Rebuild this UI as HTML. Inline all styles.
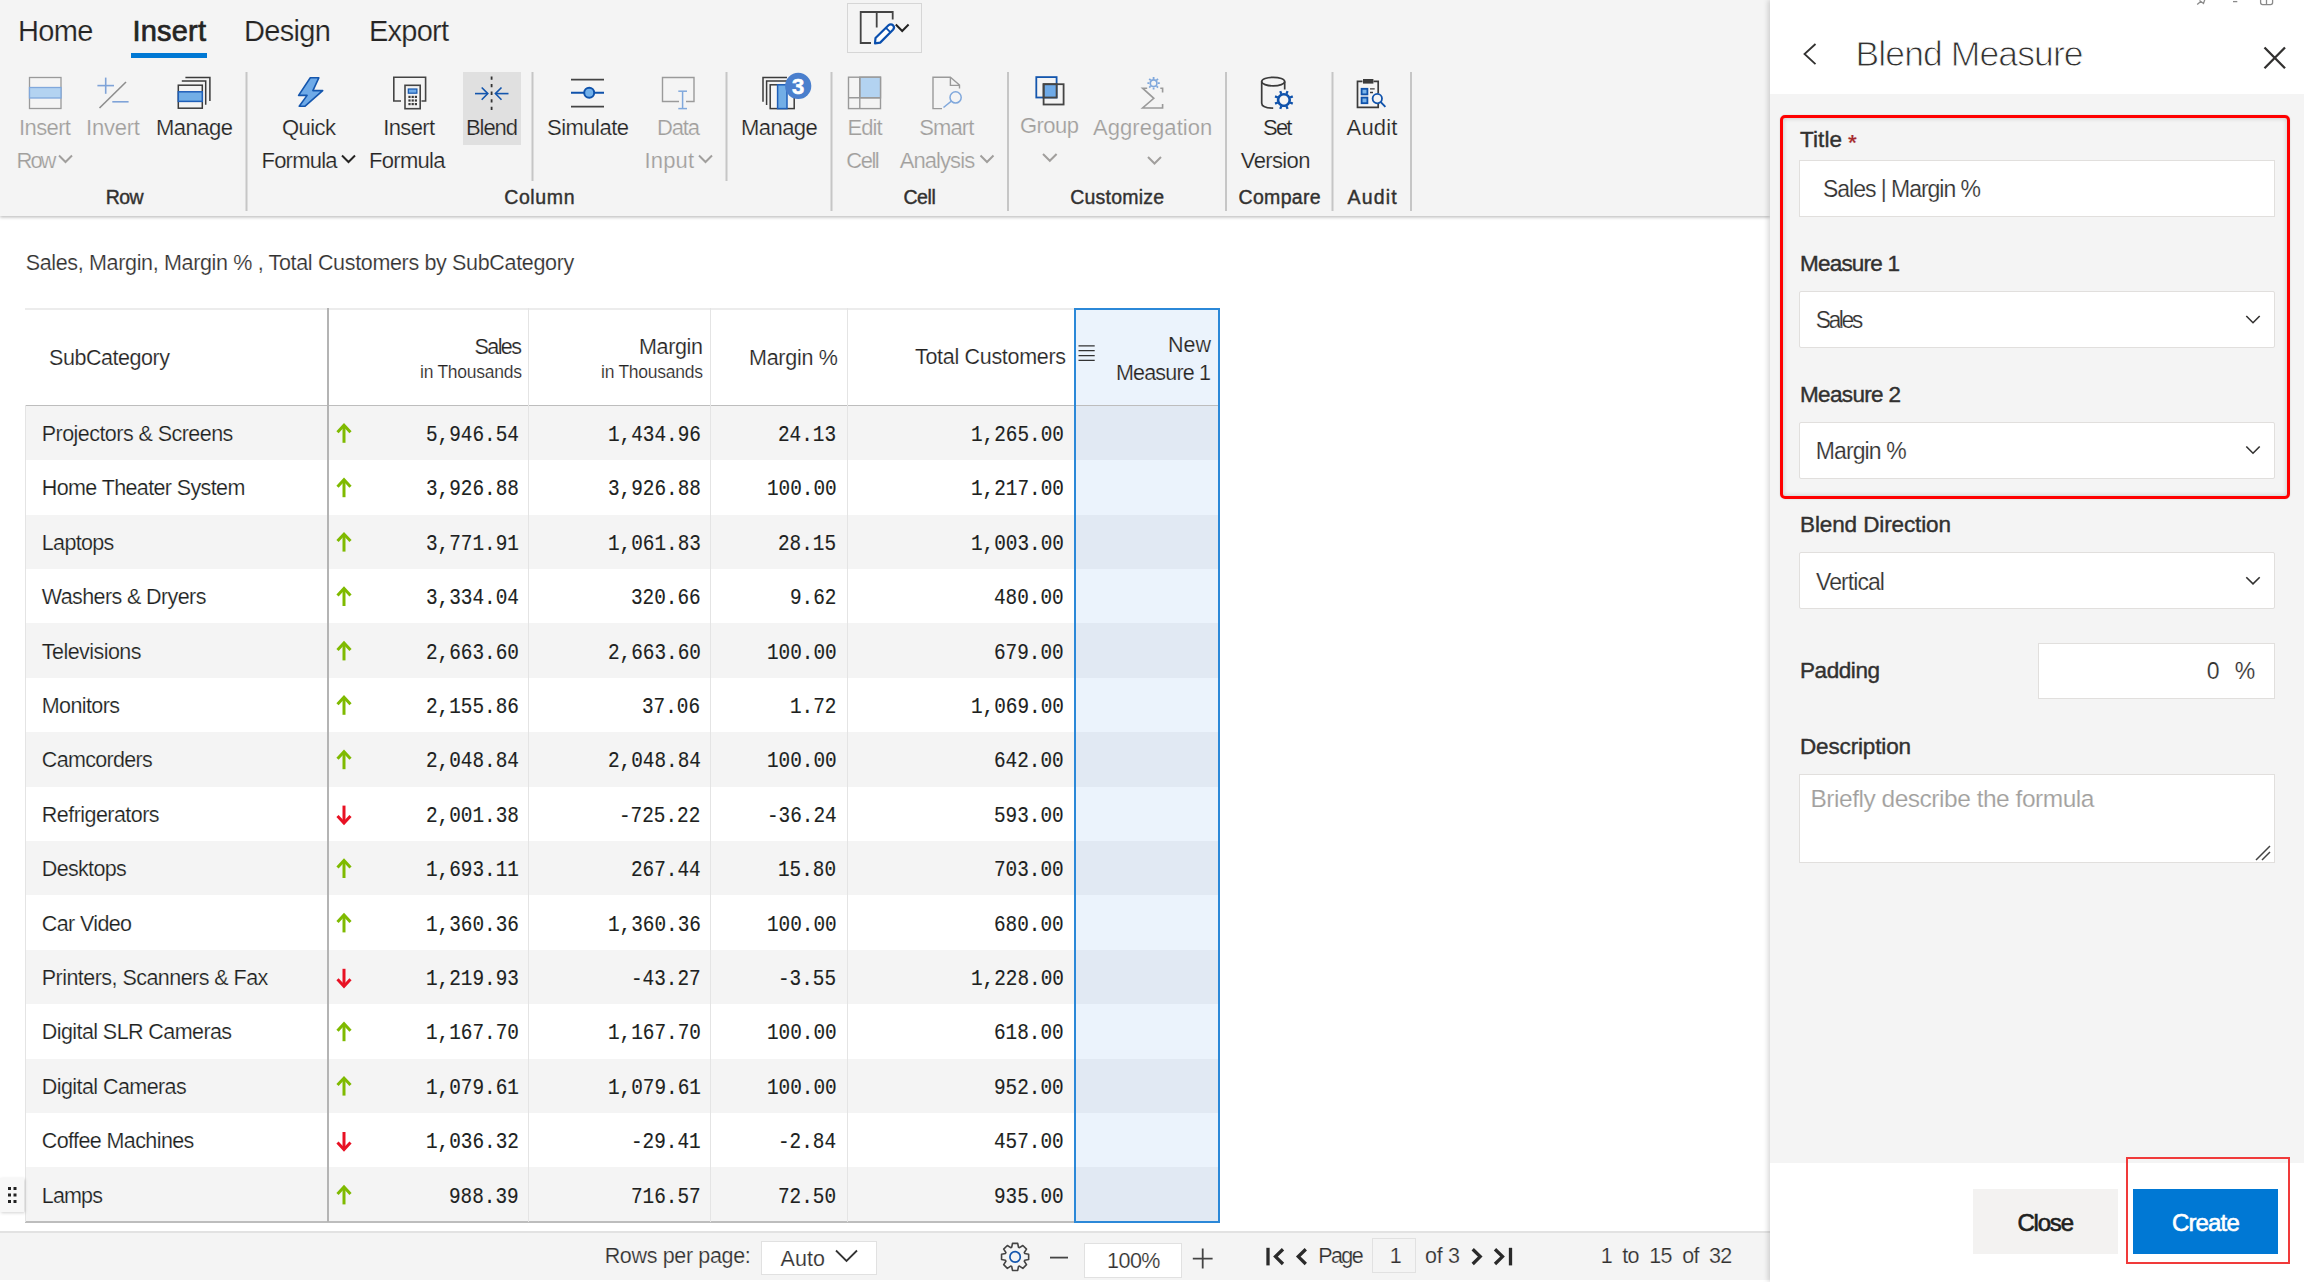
<!DOCTYPE html>
<html><head><meta charset="utf-8">
<style>
html,body{margin:0;padding:0;}
body{width:2304px;height:1282px;overflow:hidden;position:relative;background:#fff;font-family:"Liberation Sans",sans-serif;color:#252423;}
.a{position:absolute;box-sizing:border-box;}
.t{position:absolute;white-space:pre;line-height:1;-webkit-text-stroke:0.2px #f6f6f6;}
.S{font-family:"Liberation Sans",sans-serif;}
.M{font-family:"Liberation Mono",monospace;}
.rowbg{position:absolute;left:25px;width:1049px;background:#f4f4f4;}
.nmbg{position:absolute;left:1075px;width:143px;background:#e1e9f3;}
svg{position:absolute;left:0;top:0;}
</style></head><body>
<!-- ribbon -->
<div class="a" style="left:0;top:0;width:1770px;height:216px;background:#f4f4f4;box-shadow:0 1.5px 3px rgba(0,0,0,0.25);"></div>
<div class="a" style="left:131px;top:53px;width:76px;height:4.5px;background:#0078d4;"></div>
<div class="a" style="left:847px;top:2.5px;width:75px;height:50px;border:1.5px solid #d6d6d6;"></div>
<div class="a" style="left:463px;top:72px;width:58px;height:73px;background:#e0e0e0;"></div>

<!-- table -->
<div class="a" style="left:1074px;top:308px;width:145px;height:914px;background:#ebf3fc;"></div>
<div class="rowbg" style="top:405.80px;height:54.40px"></div>
<div class="nmbg" style="top:405.80px;height:54.40px"></div>
<div class="rowbg" style="top:514.60px;height:54.40px"></div>
<div class="nmbg" style="top:514.60px;height:54.40px"></div>
<div class="rowbg" style="top:623.40px;height:54.40px"></div>
<div class="nmbg" style="top:623.40px;height:54.40px"></div>
<div class="rowbg" style="top:732.20px;height:54.40px"></div>
<div class="nmbg" style="top:732.20px;height:54.40px"></div>
<div class="rowbg" style="top:841.00px;height:54.40px"></div>
<div class="nmbg" style="top:841.00px;height:54.40px"></div>
<div class="rowbg" style="top:949.80px;height:54.40px"></div>
<div class="nmbg" style="top:949.80px;height:54.40px"></div>
<div class="rowbg" style="top:1058.60px;height:54.40px"></div>
<div class="nmbg" style="top:1058.60px;height:54.40px"></div>
<div class="rowbg" style="top:1167.40px;height:54.40px"></div>
<div class="nmbg" style="top:1167.40px;height:54.40px"></div>
<div class="a" style="left:25px;top:307.8px;width:1049px;height:1.8px;background:#ececec;"></div>
<div class="a" style="left:25px;top:404.5px;width:1194px;height:1.5px;background:#bdbdbd;"></div>
<div class="a" style="left:25px;top:1221px;width:1194px;height:2px;background:#bdbdbd;"></div>
<div class="a" style="left:25px;top:405px;width:1px;height:817px;background:#e4e4e4;"></div>
<div class="a" style="left:327px;top:308px;width:1.5px;height:914px;background:#b4b4b4;"></div>
<div class="a" style="left:528px;top:308px;width:1px;height:914px;background:#e4e4e4;"></div>
<div class="a" style="left:710px;top:308px;width:1px;height:914px;background:#e4e4e4;"></div>
<div class="a" style="left:847px;top:308px;width:1px;height:914px;background:#e4e4e4;"></div>
<div class="a" style="left:1073.5px;top:308px;width:146px;height:914.5px;border:2px solid #2b88d8;"></div>
<!-- drag handle -->
<div class="a" style="left:0;top:1177.5px;width:24px;height:34.5px;background:#f7f7f7;box-shadow:1px 1px 3px rgba(0,0,0,0.18);"></div>

<!-- footer -->
<div class="a" style="left:0;top:1231px;width:1770px;height:49px;background:#f4f4f4;border-top:2px solid #e2e2e2;"></div>
<div class="a" style="left:761px;top:1240.5px;width:116px;height:34.5px;background:#fff;border:1px solid #e1e1e1;"></div>
<div class="a" style="left:1084px;top:1242.5px;width:97.5px;height:35px;background:#fff;border:1px solid #e1e1e1;"></div>
<div class="a" style="left:1372px;top:1237.5px;width:44px;height:35px;border:1px solid #e1e1e1;"></div>

<!-- panel -->
<div class="a" style="left:1770px;top:0;width:534px;height:1282px;background:#f4f4f4;box-shadow:-2px 0 5px rgba(0,0,0,0.16);"></div>
<div class="a" style="left:1770px;top:0;width:534px;height:94px;background:#fff;"></div>
<div class="a" style="left:1770px;top:1163px;width:534px;height:119px;background:#fff;"></div>
<div class="a" style="left:1780.2px;top:115px;width:509.5px;height:384px;border:3px solid #ff0000;border-radius:5px;box-shadow:inset 0 0 5px rgba(0,0,0,0.2), 0 0 1.5px rgba(0,0,0,0.2);"></div>
<div class="a" style="left:1799px;top:160px;width:476px;height:57px;background:#fff;border:1px solid #e1dfdd;"></div>
<div class="a" style="left:1799px;top:291px;width:476px;height:57px;background:#fff;border:1px solid #e1dfdd;border-radius:2px;"></div>
<div class="a" style="left:1799px;top:422px;width:476px;height:57px;background:#fff;border:1px solid #e1dfdd;border-radius:2px;"></div>
<div class="a" style="left:1799px;top:552px;width:476px;height:57px;background:#fff;border:1px solid #e1dfdd;border-radius:2px;"></div>
<div class="a" style="left:2037.5px;top:643px;width:237px;height:56px;background:#fff;border:1px solid #e1dfdd;"></div>
<div class="a" style="left:1799px;top:773.5px;width:476px;height:89px;background:#fff;border:1px solid #e1dfdd;"></div>
<div class="a" style="left:1973px;top:1189px;width:145px;height:65px;background:#f3f2f1;"></div>
<div class="a" style="left:2133px;top:1189px;width:145px;height:65px;background:#0078d4;"></div>
<div class="a" style="left:2125.5px;top:1157px;width:164px;height:106.5px;border:2px solid #f03a3a;"></div>

<svg width="2304" height="1282" viewBox="0 0 2304 1282">
<g stroke="#7fba00" stroke-width="3" fill="none"><path d="M344 442.8V425.8"/><path d="M337.5 432.3L344 425.3L350.5 432.3"/></g>
<g stroke="#7fba00" stroke-width="3" fill="none"><path d="M344 497.2V480.2"/><path d="M337.5 486.7L344 479.7L350.5 486.7"/></g>
<g stroke="#7fba00" stroke-width="3" fill="none"><path d="M344 551.6V534.6"/><path d="M337.5 541.1L344 534.1L350.5 541.1"/></g>
<g stroke="#7fba00" stroke-width="3" fill="none"><path d="M344 606.0V589.0"/><path d="M337.5 595.5L344 588.5L350.5 595.5"/></g>
<g stroke="#7fba00" stroke-width="3" fill="none"><path d="M344 660.4V643.4"/><path d="M337.5 649.9L344 642.9L350.5 649.9"/></g>
<g stroke="#7fba00" stroke-width="3" fill="none"><path d="M344 714.8V697.8"/><path d="M337.5 704.3L344 697.3L350.5 704.3"/></g>
<g stroke="#7fba00" stroke-width="3" fill="none"><path d="M344 769.2V752.2"/><path d="M337.5 758.7L344 751.7L350.5 758.7"/></g>
<g stroke="#e81123" stroke-width="3" fill="none"><path d="M344 805.6V822.6"/><path d="M337.5 816.1L344 823.1L350.5 816.1"/></g>
<g stroke="#7fba00" stroke-width="3" fill="none"><path d="M344 878.0V861.0"/><path d="M337.5 867.5L344 860.5L350.5 867.5"/></g>
<g stroke="#7fba00" stroke-width="3" fill="none"><path d="M344 932.4V915.4"/><path d="M337.5 921.9L344 914.9L350.5 921.9"/></g>
<g stroke="#e81123" stroke-width="3" fill="none"><path d="M344 968.8V985.8"/><path d="M337.5 979.3L344 986.3L350.5 979.3"/></g>
<g stroke="#7fba00" stroke-width="3" fill="none"><path d="M344 1041.2V1024.2"/><path d="M337.5 1030.7L344 1023.7L350.5 1030.7"/></g>
<g stroke="#7fba00" stroke-width="3" fill="none"><path d="M344 1095.6V1078.6"/><path d="M337.5 1085.1L344 1078.1L350.5 1085.1"/></g>
<g stroke="#e81123" stroke-width="3" fill="none"><path d="M344 1132.0V1149.0"/><path d="M337.5 1142.5L344 1149.5L350.5 1142.5"/></g>
<g stroke="#7fba00" stroke-width="3" fill="none"><path d="M344 1204.4V1187.4"/><path d="M337.5 1193.9L344 1186.9L350.5 1193.9"/></g>
<!-- separators -->
<g stroke="#c6c6c6" stroke-width="2">
<path d="M246.5 72V211"/><path d="M532.5 72V181"/><path d="M726.5 72V181"/>
<path d="M831.5 72V211"/><path d="M1008 72V211"/><path d="M1226 72V211"/><path d="M1332.5 72V211"/><path d="M1411 72V211"/>
</g>
<!-- chevrons in ribbon -->
<g fill="none" stroke-width="2">
<path d="M59 155.5L65.5 162L72 155.5" stroke="#a19f9d"/>
<path d="M342 155.5L348.5 162L355 155.5" stroke="#252423"/>
<path d="M699 155.5L705.5 162L712 155.5" stroke="#a19f9d"/>
<path d="M980.5 155.5L987 162L993.5 155.5" stroke="#a19f9d"/>
<path d="M1043 154L1049.8 160.8L1056.6 154" stroke="#a19f9d"/>
<path d="M1148 157L1154.5 163.5L1161 157" stroke="#a19f9d"/>
</g>
<!-- Insert Row -->
<rect x="29.5" y="77.5" width="31.5" height="31" fill="none" stroke="#9a9a9a" stroke-width="1.3"/>
<rect x="29.5" y="87.5" width="31.5" height="10.5" fill="#b3d3f1" stroke="#80a8dc" stroke-width="1.3"/>
<!-- Invert -->
<g stroke="#7fa3d8" stroke-width="1.6" fill="none"><path d="M97.4 85.6H114"/><path d="M105.7 77.6V93.8"/><path d="M112.3 101.8H128.6"/></g>
<path d="M99.5 108L126 82" stroke="#8d8d8d" stroke-width="1.6"/>
<!-- Manage row -->
<g fill="none" stroke="#3b3b3b" stroke-width="1.5">
<path d="M185.4 77.5H209.9V101"/><path d="M181.8 80.9H205.7V104.7"/>
<rect x="178.3" y="85.2" width="24" height="23"/>
</g>
<rect x="178.3" y="91.8" width="24" height="9.6" fill="#72aee6" stroke="#1f5fb8" stroke-width="1.5"/>
<!-- Quick formula -->
<polygon points="310.3,77.8 318.8,77.8 312.9,90.6 322.7,90.6 305.1,106.2 299.2,106.2 307.1,95.4 298.6,95.4" fill="#6eaae8" stroke="#1456ad" stroke-width="1.6" stroke-linejoin="round"/>
<!-- Insert Formula -->
<path d="M401 101H393.8V77.2H425.6V101H421.5" fill="none" stroke="#444" stroke-width="1.6"/>
<rect x="405" y="85.3" width="15.2" height="23.4" fill="#f4f4f4" stroke="#444" stroke-width="1.6"/>
<rect x="408.3" y="89" width="8.6" height="4.2" fill="#6eaae8" stroke="#1456ad" stroke-width="1.2"/>
<g fill="#3a3a3a"><rect x="408.4" y="95.8" width="2.2" height="2.2"/><rect x="411.6" y="95.8" width="2.2" height="2.2"/><rect x="414.8" y="95.8" width="2.2" height="2.2"/><rect x="408.4" y="99.4" width="2.2" height="2.2"/><rect x="411.6" y="99.4" width="2.2" height="2.2"/><rect x="414.8" y="99.4" width="2.2" height="2.2"/><rect x="408.4" y="103.0" width="2.2" height="2.2"/><rect x="411.6" y="103.0" width="2.2" height="2.2"/><rect x="414.8" y="103.0" width="2.2" height="2.2"/></g>
<!-- Blend -->
<path d="M491.6 76.4V110" stroke="#333" stroke-width="1.8" stroke-dasharray="3.3 4.3"/>
<g fill="none" stroke="#1456ad" stroke-width="1.6"><path d="M475 93.6H487.5"/><path d="M481.7 87.5L487.8 93.6L481.7 99.7"/><path d="M508.5 93.6H495.7"/><path d="M501.5 87.5L495.4 93.6L501.5 99.7"/></g>
<!-- Simulate -->
<g stroke="#444" stroke-width="1.6"><path d="M571 79.6H604"/><path d="M571 106.6H604"/></g>
<path d="M571 92.8H604" stroke="#0f52ab" stroke-width="1.9"/>
<circle cx="589.2" cy="92.8" r="5" fill="#72b0ea" stroke="#0f52ab" stroke-width="2"/>
<!-- Data input -->
<path d="M679 101.5H662.5V77.5H694V101.5H686" fill="none" stroke="#9a9a9a" stroke-width="1.4"/>
<g stroke="#80a8dc" stroke-width="1.5" fill="none"><path d="M682.6 91.2V108.6"/><path d="M678.3 91.2H687"/><path d="M678.3 108.6H687"/></g>
<!-- Manage column -->
<g fill="none" stroke="#3b3b3b" stroke-width="1.5">
<path d="M763 101.7V77.4H787"/><path d="M766.6 105V81H790"/>
<rect x="770.2" y="84.8" width="24" height="23.8"/>
</g>
<rect x="777.6" y="84.8" width="9.4" height="23.8" fill="#72aee6" stroke="#1f5fb8" stroke-width="1.5"/>
<circle cx="798.2" cy="85.9" r="13.1" fill="#4a7fcd"/>
<text x="798.2" y="93.9" font-family="Liberation Sans" font-weight="700" font-size="22" fill="#fff" stroke="#fff" stroke-width="0.6" text-anchor="middle">3</text>
<!-- Edit cell -->
<rect x="848.5" y="77.2" width="32" height="31.4" fill="none" stroke="#9a9a9a" stroke-width="1.4"/>
<rect x="859.8" y="77.2" width="20.7" height="20.6" fill="#b3d3f1" stroke="#9a9a9a" stroke-width="1.4"/>
<path d="M848.5 97.8H880.5M859.8 77.2V108.6" stroke="#9a9a9a" stroke-width="1.4"/>
<!-- Smart analysis -->
<path d="M942 108.6H933V77.2H950.4L959.5 85V88.5M950.4 77.2V85.4H959.5" fill="none" stroke="#9a9a9a" stroke-width="1.4"/>
<circle cx="955.6" cy="97.4" r="5.6" fill="none" stroke="#80a8dc" stroke-width="1.5"/>
<path d="M951.5 101L943.5 107.5" stroke="#80a8dc" stroke-width="1.6"/>
<!-- Group -->
<rect x="1036.3" y="77.1" width="20.3" height="20.4" fill="none" stroke="#1456ad" stroke-width="1.8"/>
<rect x="1043.6" y="84.2" width="13" height="13.3" fill="#6eaae8"/>
<rect x="1043.6" y="84.2" width="20" height="20.3" fill="none" stroke="#444" stroke-width="1.8"/>
<rect x="1043.6" y="84.2" width="13" height="13.3" fill="none" stroke="#444" stroke-width="1.8"/>
<!-- Aggregation -->
<path d="M1147.2 88.2H1142.6L1153.8 98.3L1142.6 108H1162.6V104M1160.3 88.2H1162.6V92.6" fill="none" stroke="#9a9a9a" stroke-width="1.6"/>
<g transform="translate(1153.6 83.2)" stroke="#80a8dc" fill="none">
<circle r="3.3" stroke-width="1.6"/>
<path d="M0 -6.2V-4.2M0 4.2V6.2M-6.2 0H-4.2M4.2 0H6.2M-4.4 -4.4L-3 -3M3 3L4.4 4.4M-4.4 4.4L-3 3M3 -3L4.4 -4.4" stroke-width="1.8"/>
</g>
<!-- Set version -->
<g fill="none" stroke="#3b3b3b" stroke-width="1.7">
<ellipse cx="1273.2" cy="81.6" rx="11.5" ry="4.3"/>
<path d="M1261.7 81.6V103.2C1261.7 106 1266 108 1273.2 108.2"/>
<path d="M1284.7 81.6V89.5"/>
</g>
<g transform="translate(1283.9 100) rotate(22.5)">
<circle r="9.6" fill="#f4f4f4"/>
<circle r="5.8" fill="none" stroke="#0f52ab" stroke-width="2.6"/>
<path d="M0 -9.6V-6.6M0 6.6V9.6M-9.6 0H-6.6M6.6 0H9.6M-6.8 -6.8L-4.7 -4.7M4.7 4.7L6.8 6.8M-6.8 6.8L-4.7 4.7M4.7 -4.7L6.8 -6.8" stroke="#0f52ab" stroke-width="2.3"/>
</g>
<!-- Audit -->
<path d="M1362.5 81.3H1357.5V107.4H1378.2V101.5M1378.2 93.5V81.3H1373.5" fill="none" stroke="#3b3b3b" stroke-width="1.7"/>
<rect x="1363" y="79" width="10.4" height="4.6" fill="#3b3b3b"/>
<rect x="1361.6" y="88.8" width="5.8" height="5.6" fill="#7ab4ea" stroke="#0f52ab" stroke-width="1.8"/>
<rect x="1361.6" y="97.6" width="5.8" height="5.6" fill="#7ab4ea" stroke="#0f52ab" stroke-width="1.8"/>
<path d="M1370 88.9H1374.7M1370 92.5H1373" stroke="#3b3b3b" stroke-width="1.4"/>
<circle cx="1377.3" cy="98.6" r="4.7" fill="#f4f4f4" stroke="#0f52ab" stroke-width="1.8"/>
<path d="M1380.8 102.2L1385.4 106.8" stroke="#0f52ab" stroke-width="1.9"/>
<!-- quick access icon -->
<path d="M871 43H860.7V12H892.7V19.5M876.7 12V27.6" fill="none" stroke="#444" stroke-width="1.8"/>
<path d="M875 43.4L875.5 38L888.5 25.3C889.8 24 891.8 24 893 25.3C894.2 26.6 894.2 28.5 893 29.8L880.2 42.6Z" fill="#fff" stroke="#0a4fae" stroke-width="2.2" stroke-linejoin="round"/>
<path d="M886 27.8L890.5 32.3" stroke="#0a4fae" stroke-width="1.8"/>
<path d="M895.8 24.5L902.2 31L908.6 24.5" fill="none" stroke="#222" stroke-width="2"/>
<!-- table header hamburger -->
<path d="M1078.5 345.8H1094.7M1078.5 350.7H1094.7M1078.5 355.6H1094.7M1078.5 360.3H1094.7" stroke="#333" stroke-width="1.3"/>
<!-- drag handle dots -->
<g fill="#222"><rect x="8" y="1187" width="3" height="3"/><rect x="13.5" y="1187" width="3" height="3"/><rect x="8" y="1193.5" width="3" height="3"/><rect x="13.5" y="1193.5" width="3" height="3"/><rect x="8" y="1200" width="3" height="3"/><rect x="13.5" y="1200" width="3" height="3"/></g>
<!-- footer icons -->
<path d="M836 1250.5L846.5 1261L857 1250.5" fill="none" stroke="#333" stroke-width="1.8"/>
<path d="M1011.70 1247.28 L1012.50 1243.35 L1017.70 1243.35 L1018.50 1247.28 L1019.50 1247.70 L1022.84 1245.48 L1026.52 1249.16 L1024.30 1252.50 L1024.72 1253.50 L1028.65 1254.30 L1028.65 1259.50 L1024.72 1260.30 L1024.30 1261.30 L1026.52 1264.64 L1022.84 1268.32 L1019.50 1266.10 L1018.50 1266.52 L1017.70 1270.45 L1012.50 1270.45 L1011.70 1266.52 L1010.70 1266.10 L1007.36 1268.32 L1003.68 1264.64 L1005.90 1261.30 L1005.48 1260.30 L1001.55 1259.50 L1001.55 1254.30 L1005.48 1253.50 L1005.90 1252.50 L1003.68 1249.16 L1007.36 1245.48 L1010.70 1247.70Z" fill="none" stroke="#444" stroke-width="1.6" stroke-linejoin="round"/>
<circle cx="1015.1" cy="1256.9" r="5.2" fill="none" stroke="#1456ad" stroke-width="1.7"/>
<path d="M1050 1257.6H1068" stroke="#444" stroke-width="1.8"/>
<path d="M1192.8 1258.6H1212.6M1202.7 1248.6V1268.6" stroke="#444" stroke-width="1.8"/>
<g fill="none" stroke="#2a2a2a" stroke-width="3.3" stroke-linejoin="miter">
<path d="M1268 1247.8V1265.4"/><path d="M1283 1249.3L1275.5 1256.6L1283 1264"/>
<path d="M1305.8 1249.3L1298.3 1256.6L1305.8 1264"/>
<path d="M1472.7 1249.3L1480.2 1256.6L1472.7 1264"/>
<path d="M1495 1249.3L1502.5 1256.6L1495 1264"/><path d="M1510.5 1247.8V1265.4"/>
</g>
<!-- panel icons -->
<path d="M1815.5 44L1804.5 54L1815.5 64.2" fill="none" stroke="#323130" stroke-width="1.8"/>
<path d="M2264.5 47.5L2285 68.2M2285 47.5L2264.5 68.2" stroke="#323130" stroke-width="2.3"/>
<g fill="none" stroke="#323130" stroke-width="1.6">
<path d="M2246.3 316L2253 322.7L2259.7 316"/>
<path d="M2246.3 446.5L2253 453.2L2259.7 446.5"/>
<path d="M2246.3 577.2L2253 583.9L2259.7 577.2"/>
</g>
<path d="M2256 860L2270 846M2262 860L2270 852" stroke="#444" stroke-width="1.5"/>
<!-- top tiny window icons -->
<g stroke="#8a8a8a" stroke-width="1.3" fill="none"><path d="M2197.2 4.5L2201 1.2M2199.5 0.5L2203.5 3.5L2205 -1"/><path d="M2233 1.6H2237.3"/><rect x="2260.6" y="-6" width="12" height="10.6" rx="2"/><path d="M2266.5 -6V4.5"/></g>

</svg>
<div class="t S" style="top:17.0px;font-size:29px;letter-spacing:-0.62px;left:18.0px;">Home</div>
<div class="t S" style="top:17.0px;font-size:29px;letter-spacing:0.19px;left:132.5px;-webkit-text-stroke:0.7px #252423;">Insert</div>
<div class="t S" style="top:17.0px;font-size:29px;letter-spacing:-0.66px;left:244.0px;">Design</div>
<div class="t S" style="top:17.0px;font-size:29px;letter-spacing:-0.77px;left:369.0px;">Export</div>
<div class="t S" style="top:117.3px;font-size:22px;color:#a19f9d;letter-spacing:-0.61px;left:19.0px;">Insert</div>
<div class="t S" style="top:149.8px;font-size:22px;color:#a19f9d;letter-spacing:-2.01px;left:16.5px;">Row</div>
<div class="t S" style="top:117.3px;font-size:22px;color:#a19f9d;letter-spacing:-0.21px;left:86.0px;">Invert</div>
<div class="t S" style="top:117.3px;font-size:22px;letter-spacing:-0.50px;left:156.0px;">Manage</div>
<div class="t S" style="top:117.3px;font-size:22px;letter-spacing:-0.56px;left:282.0px;">Quick</div>
<div class="t S" style="top:149.8px;font-size:22px;letter-spacing:-0.78px;left:261.5px;">Formula</div>
<div class="t S" style="top:117.3px;font-size:22px;letter-spacing:-0.61px;left:383.2px;">Insert</div>
<div class="t S" style="top:149.8px;font-size:22px;letter-spacing:-0.70px;left:369.0px;">Formula</div>
<div class="t S" style="top:117.3px;font-size:22px;letter-spacing:-1.07px;left:466.0px;">Blend</div>
<div class="t S" style="top:117.3px;font-size:22px;letter-spacing:-0.51px;left:547.0px;">Simulate</div>
<div class="t S" style="top:117.3px;font-size:22px;color:#a19f9d;letter-spacing:-1.16px;left:657.0px;">Data</div>
<div class="t S" style="top:149.8px;font-size:22px;color:#a19f9d;letter-spacing:0.12px;left:644.6px;">Input</div>
<div class="t S" style="top:117.3px;font-size:22px;letter-spacing:-0.54px;left:741.0px;">Manage</div>
<div class="t S" style="top:117.3px;font-size:22px;color:#a19f9d;letter-spacing:-0.97px;left:847.6px;">Edit</div>
<div class="t S" style="top:149.8px;font-size:22px;color:#a19f9d;letter-spacing:-1.50px;left:846.3px;">Cell</div>
<div class="t S" style="top:117.3px;font-size:22px;color:#a19f9d;letter-spacing:-0.85px;left:919.2px;">Smart</div>
<div class="t S" style="top:149.8px;font-size:22px;color:#a19f9d;letter-spacing:-0.92px;left:899.7px;">Analysis</div>
<div class="t S" style="top:115.0px;font-size:22px;color:#a19f9d;letter-spacing:-0.54px;left:1020.0px;">Group</div>
<div class="t S" style="top:117.3px;font-size:22px;color:#a19f9d;letter-spacing:0.07px;left:1093.0px;">Aggregation</div>
<div class="t S" style="top:117.3px;font-size:22px;letter-spacing:-1.77px;left:1263.0px;">Set</div>
<div class="t S" style="top:149.8px;font-size:22px;letter-spacing:-0.63px;left:1240.8px;">Version</div>
<div class="t S" style="top:117.3px;font-size:22px;letter-spacing:0.14px;left:1346.6px;">Audit</div>
<div class="t S" style="top:187.9px;font-size:19.5px;color:#323130;letter-spacing:-0.56px;left:105.8px;-webkit-text-stroke:0.4px #323130;">Row</div>
<div class="t S" style="top:187.9px;font-size:19.5px;color:#323130;letter-spacing:0.62px;left:504.2px;-webkit-text-stroke:0.4px #323130;">Column</div>
<div class="t S" style="top:187.9px;font-size:19.5px;color:#323130;letter-spacing:-0.40px;left:903.4px;-webkit-text-stroke:0.4px #323130;">Cell</div>
<div class="t S" style="top:187.9px;font-size:19.5px;color:#323130;letter-spacing:0.20px;left:1070.3px;-webkit-text-stroke:0.4px #323130;">Customize</div>
<div class="t S" style="top:187.9px;font-size:19.5px;color:#323130;letter-spacing:0.30px;left:1238.6px;-webkit-text-stroke:0.4px #323130;">Compare</div>
<div class="t S" style="top:187.9px;font-size:19.5px;color:#323130;letter-spacing:1.21px;left:1347.5px;-webkit-text-stroke:0.4px #323130;">Audit</div>
<div class="t S" style="top:252.5px;font-size:21.5px;color:#323130;letter-spacing:-0.34px;left:25.7px;">Sales, Margin, Margin % , Total Customers by SubCategory</div>
<div class="t S" style="top:348.0px;font-size:21.5px;letter-spacing:-0.45px;left:49.0px;">SubCategory</div>
<div class="t S" style="top:337.1px;font-size:21.5px;letter-spacing:-1.57px;left:474.5px;">Sales</div>
<div class="t S" style="top:363.5px;font-size:17.5px;letter-spacing:-0.25px;left:420.0px;">in Thousands</div>
<div class="t S" style="top:337.1px;font-size:21.5px;letter-spacing:-0.34px;left:639.0px;">Margin</div>
<div class="t S" style="top:363.5px;font-size:17.5px;letter-spacing:-0.25px;left:601.0px;">in Thousands</div>
<div class="t S" style="top:347.7px;font-size:21.5px;letter-spacing:-0.26px;left:749.0px;">Margin %</div>
<div class="t S" style="top:347.4px;font-size:21.5px;letter-spacing:-0.31px;left:915.0px;">Total Customers</div>
<div class="t S" style="top:334.9px;font-size:21.5px;left:1168.0px;">New</div>
<div class="t S" style="top:362.7px;font-size:21.5px;letter-spacing:-0.82px;left:1116.0px;">Measure 1</div>
<div class="t S" style="top:424.0px;font-size:21.5px;color:#201f1e;letter-spacing:-0.55px;left:41.8px;">Projectors &amp; Screens</div>
<div class="t M" style="top:424.0px;font-size:22.5px;color:#201f1e;transform:scaleX(0.86);transform-origin:0 0;left:425.6px;-webkit-text-stroke:0.15px #201f1e;">5,946.54</div>
<div class="t M" style="top:424.0px;font-size:22.5px;color:#201f1e;transform:scaleX(0.86);transform-origin:0 0;left:607.6px;-webkit-text-stroke:0.15px #201f1e;">1,434.96</div>
<div class="t M" style="top:424.0px;font-size:22.5px;color:#201f1e;transform:scaleX(0.86);transform-origin:0 0;left:778.4px;-webkit-text-stroke:0.15px #201f1e;">24.13</div>
<div class="t M" style="top:424.0px;font-size:22.5px;color:#201f1e;transform:scaleX(0.86);transform-origin:0 0;left:970.6px;-webkit-text-stroke:0.15px #201f1e;">1,265.00</div>
<div class="t S" style="top:478.4px;font-size:21.5px;color:#201f1e;letter-spacing:-0.62px;left:41.8px;">Home Theater System</div>
<div class="t M" style="top:478.4px;font-size:22.5px;color:#201f1e;transform:scaleX(0.86);transform-origin:0 0;left:425.6px;-webkit-text-stroke:0.15px #201f1e;">3,926.88</div>
<div class="t M" style="top:478.4px;font-size:22.5px;color:#201f1e;transform:scaleX(0.86);transform-origin:0 0;left:607.6px;-webkit-text-stroke:0.15px #201f1e;">3,926.88</div>
<div class="t M" style="top:478.4px;font-size:22.5px;color:#201f1e;transform:scaleX(0.86);transform-origin:0 0;left:766.8px;-webkit-text-stroke:0.15px #201f1e;">100.00</div>
<div class="t M" style="top:478.4px;font-size:22.5px;color:#201f1e;transform:scaleX(0.86);transform-origin:0 0;left:970.6px;-webkit-text-stroke:0.15px #201f1e;">1,217.00</div>
<div class="t S" style="top:532.8px;font-size:21.5px;color:#201f1e;letter-spacing:-0.66px;left:41.8px;">Laptops</div>
<div class="t M" style="top:532.8px;font-size:22.5px;color:#201f1e;transform:scaleX(0.86);transform-origin:0 0;left:425.6px;-webkit-text-stroke:0.15px #201f1e;">3,771.91</div>
<div class="t M" style="top:532.8px;font-size:22.5px;color:#201f1e;transform:scaleX(0.86);transform-origin:0 0;left:607.6px;-webkit-text-stroke:0.15px #201f1e;">1,061.83</div>
<div class="t M" style="top:532.8px;font-size:22.5px;color:#201f1e;transform:scaleX(0.86);transform-origin:0 0;left:778.4px;-webkit-text-stroke:0.15px #201f1e;">28.15</div>
<div class="t M" style="top:532.8px;font-size:22.5px;color:#201f1e;transform:scaleX(0.86);transform-origin:0 0;left:970.6px;-webkit-text-stroke:0.15px #201f1e;">1,003.00</div>
<div class="t S" style="top:587.2px;font-size:21.5px;color:#201f1e;letter-spacing:-0.60px;left:41.8px;">Washers &amp; Dryers</div>
<div class="t M" style="top:587.2px;font-size:22.5px;color:#201f1e;transform:scaleX(0.86);transform-origin:0 0;left:425.6px;-webkit-text-stroke:0.15px #201f1e;">3,334.04</div>
<div class="t M" style="top:587.2px;font-size:22.5px;color:#201f1e;transform:scaleX(0.86);transform-origin:0 0;left:630.8px;-webkit-text-stroke:0.15px #201f1e;">320.66</div>
<div class="t M" style="top:587.2px;font-size:22.5px;color:#201f1e;transform:scaleX(0.86);transform-origin:0 0;left:790.0px;-webkit-text-stroke:0.15px #201f1e;">9.62</div>
<div class="t M" style="top:587.2px;font-size:22.5px;color:#201f1e;transform:scaleX(0.86);transform-origin:0 0;left:993.8px;-webkit-text-stroke:0.15px #201f1e;">480.00</div>
<div class="t S" style="top:641.6px;font-size:21.5px;color:#201f1e;letter-spacing:-0.55px;left:41.8px;">Televisions</div>
<div class="t M" style="top:641.6px;font-size:22.5px;color:#201f1e;transform:scaleX(0.86);transform-origin:0 0;left:425.6px;-webkit-text-stroke:0.15px #201f1e;">2,663.60</div>
<div class="t M" style="top:641.6px;font-size:22.5px;color:#201f1e;transform:scaleX(0.86);transform-origin:0 0;left:607.6px;-webkit-text-stroke:0.15px #201f1e;">2,663.60</div>
<div class="t M" style="top:641.6px;font-size:22.5px;color:#201f1e;transform:scaleX(0.86);transform-origin:0 0;left:766.8px;-webkit-text-stroke:0.15px #201f1e;">100.00</div>
<div class="t M" style="top:641.6px;font-size:22.5px;color:#201f1e;transform:scaleX(0.86);transform-origin:0 0;left:993.8px;-webkit-text-stroke:0.15px #201f1e;">679.00</div>
<div class="t S" style="top:696.0px;font-size:21.5px;color:#201f1e;letter-spacing:-0.61px;left:41.8px;">Monitors</div>
<div class="t M" style="top:696.0px;font-size:22.5px;color:#201f1e;transform:scaleX(0.86);transform-origin:0 0;left:425.6px;-webkit-text-stroke:0.15px #201f1e;">2,155.86</div>
<div class="t M" style="top:696.0px;font-size:22.5px;color:#201f1e;transform:scaleX(0.86);transform-origin:0 0;left:642.4px;-webkit-text-stroke:0.15px #201f1e;">37.06</div>
<div class="t M" style="top:696.0px;font-size:22.5px;color:#201f1e;transform:scaleX(0.86);transform-origin:0 0;left:790.0px;-webkit-text-stroke:0.15px #201f1e;">1.72</div>
<div class="t M" style="top:696.0px;font-size:22.5px;color:#201f1e;transform:scaleX(0.86);transform-origin:0 0;left:970.6px;-webkit-text-stroke:0.15px #201f1e;">1,069.00</div>
<div class="t S" style="top:750.4px;font-size:21.5px;color:#201f1e;letter-spacing:-0.68px;left:41.8px;">Camcorders</div>
<div class="t M" style="top:750.4px;font-size:22.5px;color:#201f1e;transform:scaleX(0.86);transform-origin:0 0;left:425.6px;-webkit-text-stroke:0.15px #201f1e;">2,048.84</div>
<div class="t M" style="top:750.4px;font-size:22.5px;color:#201f1e;transform:scaleX(0.86);transform-origin:0 0;left:607.6px;-webkit-text-stroke:0.15px #201f1e;">2,048.84</div>
<div class="t M" style="top:750.4px;font-size:22.5px;color:#201f1e;transform:scaleX(0.86);transform-origin:0 0;left:766.8px;-webkit-text-stroke:0.15px #201f1e;">100.00</div>
<div class="t M" style="top:750.4px;font-size:22.5px;color:#201f1e;transform:scaleX(0.86);transform-origin:0 0;left:993.8px;-webkit-text-stroke:0.15px #201f1e;">642.00</div>
<div class="t S" style="top:804.8px;font-size:21.5px;color:#201f1e;letter-spacing:-0.54px;left:41.8px;">Refrigerators</div>
<div class="t M" style="top:804.8px;font-size:22.5px;color:#201f1e;transform:scaleX(0.86);transform-origin:0 0;left:425.6px;-webkit-text-stroke:0.15px #201f1e;">2,001.38</div>
<div class="t M" style="top:804.8px;font-size:22.5px;color:#201f1e;transform:scaleX(0.86);transform-origin:0 0;left:619.2px;-webkit-text-stroke:0.15px #201f1e;">-725.22</div>
<div class="t M" style="top:804.8px;font-size:22.5px;color:#201f1e;transform:scaleX(0.86);transform-origin:0 0;left:766.8px;-webkit-text-stroke:0.15px #201f1e;">-36.24</div>
<div class="t M" style="top:804.8px;font-size:22.5px;color:#201f1e;transform:scaleX(0.86);transform-origin:0 0;left:993.8px;-webkit-text-stroke:0.15px #201f1e;">593.00</div>
<div class="t S" style="top:859.2px;font-size:21.5px;color:#201f1e;letter-spacing:-0.67px;left:41.8px;">Desktops</div>
<div class="t M" style="top:859.2px;font-size:22.5px;color:#201f1e;transform:scaleX(0.86);transform-origin:0 0;left:425.6px;-webkit-text-stroke:0.15px #201f1e;">1,693.11</div>
<div class="t M" style="top:859.2px;font-size:22.5px;color:#201f1e;transform:scaleX(0.86);transform-origin:0 0;left:630.8px;-webkit-text-stroke:0.15px #201f1e;">267.44</div>
<div class="t M" style="top:859.2px;font-size:22.5px;color:#201f1e;transform:scaleX(0.86);transform-origin:0 0;left:778.4px;-webkit-text-stroke:0.15px #201f1e;">15.80</div>
<div class="t M" style="top:859.2px;font-size:22.5px;color:#201f1e;transform:scaleX(0.86);transform-origin:0 0;left:993.8px;-webkit-text-stroke:0.15px #201f1e;">703.00</div>
<div class="t S" style="top:913.6px;font-size:21.5px;color:#201f1e;letter-spacing:-0.62px;left:41.8px;">Car Video</div>
<div class="t M" style="top:913.6px;font-size:22.5px;color:#201f1e;transform:scaleX(0.86);transform-origin:0 0;left:425.6px;-webkit-text-stroke:0.15px #201f1e;">1,360.36</div>
<div class="t M" style="top:913.6px;font-size:22.5px;color:#201f1e;transform:scaleX(0.86);transform-origin:0 0;left:607.6px;-webkit-text-stroke:0.15px #201f1e;">1,360.36</div>
<div class="t M" style="top:913.6px;font-size:22.5px;color:#201f1e;transform:scaleX(0.86);transform-origin:0 0;left:766.8px;-webkit-text-stroke:0.15px #201f1e;">100.00</div>
<div class="t M" style="top:913.6px;font-size:22.5px;color:#201f1e;transform:scaleX(0.86);transform-origin:0 0;left:993.8px;-webkit-text-stroke:0.15px #201f1e;">680.00</div>
<div class="t S" style="top:968.0px;font-size:21.5px;color:#201f1e;letter-spacing:-0.54px;left:41.8px;">Printers, Scanners &amp; Fax</div>
<div class="t M" style="top:968.0px;font-size:22.5px;color:#201f1e;transform:scaleX(0.86);transform-origin:0 0;left:425.6px;-webkit-text-stroke:0.15px #201f1e;">1,219.93</div>
<div class="t M" style="top:968.0px;font-size:22.5px;color:#201f1e;transform:scaleX(0.86);transform-origin:0 0;left:630.8px;-webkit-text-stroke:0.15px #201f1e;">-43.27</div>
<div class="t M" style="top:968.0px;font-size:22.5px;color:#201f1e;transform:scaleX(0.86);transform-origin:0 0;left:778.4px;-webkit-text-stroke:0.15px #201f1e;">-3.55</div>
<div class="t M" style="top:968.0px;font-size:22.5px;color:#201f1e;transform:scaleX(0.86);transform-origin:0 0;left:970.6px;-webkit-text-stroke:0.15px #201f1e;">1,228.00</div>
<div class="t S" style="top:1022.4px;font-size:21.5px;color:#201f1e;letter-spacing:-0.58px;left:41.8px;">Digital SLR Cameras</div>
<div class="t M" style="top:1022.4px;font-size:22.5px;color:#201f1e;transform:scaleX(0.86);transform-origin:0 0;left:425.6px;-webkit-text-stroke:0.15px #201f1e;">1,167.70</div>
<div class="t M" style="top:1022.4px;font-size:22.5px;color:#201f1e;transform:scaleX(0.86);transform-origin:0 0;left:607.6px;-webkit-text-stroke:0.15px #201f1e;">1,167.70</div>
<div class="t M" style="top:1022.4px;font-size:22.5px;color:#201f1e;transform:scaleX(0.86);transform-origin:0 0;left:766.8px;-webkit-text-stroke:0.15px #201f1e;">100.00</div>
<div class="t M" style="top:1022.4px;font-size:22.5px;color:#201f1e;transform:scaleX(0.86);transform-origin:0 0;left:993.8px;-webkit-text-stroke:0.15px #201f1e;">618.00</div>
<div class="t S" style="top:1076.8px;font-size:21.5px;color:#201f1e;letter-spacing:-0.57px;left:41.8px;">Digital Cameras</div>
<div class="t M" style="top:1076.8px;font-size:22.5px;color:#201f1e;transform:scaleX(0.86);transform-origin:0 0;left:425.6px;-webkit-text-stroke:0.15px #201f1e;">1,079.61</div>
<div class="t M" style="top:1076.8px;font-size:22.5px;color:#201f1e;transform:scaleX(0.86);transform-origin:0 0;left:607.6px;-webkit-text-stroke:0.15px #201f1e;">1,079.61</div>
<div class="t M" style="top:1076.8px;font-size:22.5px;color:#201f1e;transform:scaleX(0.86);transform-origin:0 0;left:766.8px;-webkit-text-stroke:0.15px #201f1e;">100.00</div>
<div class="t M" style="top:1076.8px;font-size:22.5px;color:#201f1e;transform:scaleX(0.86);transform-origin:0 0;left:993.8px;-webkit-text-stroke:0.15px #201f1e;">952.00</div>
<div class="t S" style="top:1131.2px;font-size:21.5px;color:#201f1e;letter-spacing:-0.60px;left:41.8px;">Coffee Machines</div>
<div class="t M" style="top:1131.2px;font-size:22.5px;color:#201f1e;transform:scaleX(0.86);transform-origin:0 0;left:425.6px;-webkit-text-stroke:0.15px #201f1e;">1,036.32</div>
<div class="t M" style="top:1131.2px;font-size:22.5px;color:#201f1e;transform:scaleX(0.86);transform-origin:0 0;left:630.8px;-webkit-text-stroke:0.15px #201f1e;">-29.41</div>
<div class="t M" style="top:1131.2px;font-size:22.5px;color:#201f1e;transform:scaleX(0.86);transform-origin:0 0;left:778.4px;-webkit-text-stroke:0.15px #201f1e;">-2.84</div>
<div class="t M" style="top:1131.2px;font-size:22.5px;color:#201f1e;transform:scaleX(0.86);transform-origin:0 0;left:993.8px;-webkit-text-stroke:0.15px #201f1e;">457.00</div>
<div class="t S" style="top:1185.6px;font-size:21.5px;color:#201f1e;letter-spacing:-0.84px;left:41.8px;">Lamps</div>
<div class="t M" style="top:1185.6px;font-size:22.5px;color:#201f1e;transform:scaleX(0.86);transform-origin:0 0;left:448.8px;-webkit-text-stroke:0.15px #201f1e;">988.39</div>
<div class="t M" style="top:1185.6px;font-size:22.5px;color:#201f1e;transform:scaleX(0.86);transform-origin:0 0;left:630.8px;-webkit-text-stroke:0.15px #201f1e;">716.57</div>
<div class="t M" style="top:1185.6px;font-size:22.5px;color:#201f1e;transform:scaleX(0.86);transform-origin:0 0;left:778.4px;-webkit-text-stroke:0.15px #201f1e;">72.50</div>
<div class="t M" style="top:1185.6px;font-size:22.5px;color:#201f1e;transform:scaleX(0.86);transform-origin:0 0;left:993.8px;-webkit-text-stroke:0.15px #201f1e;">935.00</div>
<div class="t S" style="top:1246.3px;font-size:21.5px;color:#323130;letter-spacing:-0.35px;left:604.7px;">Rows per page:</div>
<div class="t S" style="top:1249.0px;font-size:21.5px;color:#323130;letter-spacing:0.09px;left:780.5px;">Auto</div>
<div class="t S" style="top:1251.0px;font-size:21.5px;color:#323130;letter-spacing:-0.50px;left:1107.0px;">100%</div>
<div class="t S" style="top:1246.3px;font-size:21.5px;color:#323130;letter-spacing:-1.64px;left:1318.3px;">Page</div>
<div class="t S" style="top:1246.3px;font-size:21.5px;color:#323130;left:1389.8px;">1</div>
<div class="t S" style="top:1246.3px;font-size:21.5px;color:#323130;letter-spacing:-0.29px;left:1425.0px;">of 3</div>
<div class="t S" style="top:1246.3px;font-size:21.5px;color:#323130;letter-spacing:-0.74px;left:1600.7px;">1  to  15  of  32</div>
<div class="t S" style="top:37.0px;font-size:35.5px;color:#323130;letter-spacing:-0.90px;left:1855.6px;-webkit-text-stroke:0.9px #ffffff;">Blend Measure</div>
<div class="t S" style="top:128.8px;font-size:22.5px;color:#323130;letter-spacing:0.08px;left:1800.0px;-webkit-text-stroke:0.4px #323130;">Title</div>
<div class="t S" style="top:132.0px;font-size:22.5px;font-weight:700;color:#a4262c;left:1848.0px;">*</div>
<div class="t S" style="top:177.7px;font-size:23px;color:#323130;letter-spacing:-1.03px;left:1823.0px;">Sales | Margin %</div>
<div class="t S" style="top:253.0px;font-size:22.5px;color:#323130;letter-spacing:-0.79px;left:1800.0px;-webkit-text-stroke:0.4px #323130;">Measure 1</div>
<div class="t S" style="top:308.9px;font-size:23px;color:#323130;letter-spacing:-2.49px;left:1815.7px;">Sales</div>
<div class="t S" style="top:383.6px;font-size:22.5px;color:#323130;letter-spacing:-0.66px;left:1800.0px;-webkit-text-stroke:0.4px #323130;">Measure 2</div>
<div class="t S" style="top:440.0px;font-size:23px;color:#323130;letter-spacing:-0.88px;left:1815.7px;">Margin %</div>
<div class="t S" style="top:514.0px;font-size:22.5px;color:#323130;letter-spacing:-0.11px;left:1800.0px;-webkit-text-stroke:0.4px #323130;">Blend Direction</div>
<div class="t S" style="top:570.5px;font-size:23px;color:#323130;letter-spacing:-0.92px;left:1816.0px;">Vertical</div>
<div class="t S" style="top:659.8px;font-size:22.5px;color:#323130;letter-spacing:-0.43px;left:1800.0px;-webkit-text-stroke:0.4px #323130;">Padding</div>
<div class="t S" style="top:660.0px;font-size:23px;color:#323130;left:2206.7px;">0</div>
<div class="t S" style="top:660.0px;font-size:23px;color:#323130;left:2234.7px;">%</div>
<div class="t S" style="top:736.2px;font-size:22.5px;color:#323130;letter-spacing:-0.15px;left:1800.0px;-webkit-text-stroke:0.4px #323130;">Description</div>
<div class="t S" style="top:787.0px;font-size:24.5px;color:#a19f9d;letter-spacing:-0.48px;left:1810.5px;">Briefly describe the formula</div>
<div class="t S" style="top:1211.0px;font-size:24px;color:#201f1e;letter-spacing:-1.19px;left:2017.4px;-webkit-text-stroke:0.6px #201f1e;">Close</div>
<div class="t S" style="top:1211.0px;font-size:24px;color:#ffffff;letter-spacing:-0.85px;left:2172.0px;-webkit-text-stroke:0.6px #ffffff;">Create</div>
</body></html>
